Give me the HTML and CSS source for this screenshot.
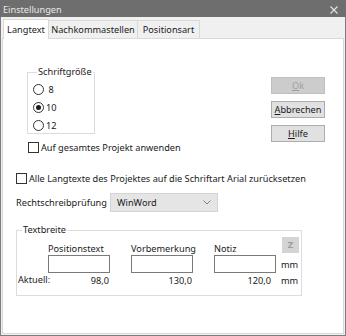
FILE: index.html
```html
<!DOCTYPE html>
<html lang="de">

<head>
    <meta charset="UTF-8">
    <title>Einstellungen</title>
    <link rel="stylesheet" href="styles.css">
</head>

<body>
    <div class="window">
        <div class="titlebar">
            <span class="title">Einstellungen</span>
            <svg class="close" width="10" height="10" viewBox="0 0 10 10">
                <path d="M1.5 1.5 L8.5 8.5 M8.5 1.5 L1.5 8.5" stroke="#e6e6e6" stroke-width="1.1" fill="none" />
            </svg>
        </div>
        <div class="client">
            <div class="tabs">
                <div class="tab active">Langtext</div>
                <div class="tab tab-wide">Nachkommastellen</div>
                <div class="tab tab-mid">Positionsart</div>
            </div>
            <div class="panel">
                <div class="top">
                    <div class="left-col">
                        <fieldset class="group size-group">
                            <legend>Schriftgröße</legend>
                            <div class="radio"><span class="circle"></span><span>&nbsp;8</span></div>
                            <div class="radio"><span class="circle checked"></span><span>10</span></div>
                            <div class="radio"><span class="circle"></span><span>12</span></div>
                        </fieldset>
                        <div class="check apply-row"><span class="box"></span>Auf gesamtes Projekt anwenden</div>
                    </div>
                    <div class="buttons">
                        <button class="btn disabled"><u>O</u>k</button>
                        <button class="btn"><u>A</u>bbrechen</button>
                        <button class="btn"><u>H</u>ilfe</button>
                    </div>
                </div>

                <div class="check reset-row"><span class="box"></span>Alle Langtexte des Projektes auf die Schriftart Arial zurücksetzen</div>

                <div class="spell-row">
                    <span class="spell-label">Rechtschreibprüfung</span>
                    <div class="select">
                        <span>WinWord</span>
                        <svg width="8" height="5" viewBox="0 0 8 5">
                            <path d="M0.5 0.5 L4 4 L7.5 0.5" stroke="#808080" stroke-width="1" fill="none" />
                        </svg>
                    </div>
                </div>

                <fieldset class="group width-group">
                    <legend>Textbreite</legend>
                    <div class="z-btn">Z</div>
                    <div class="width-grid">
                        <span></span>
                        <span class="col-label">Positionstext</span>
                        <span class="col-label">Vorbemerkung</span>
                        <span class="col-label">Notiz</span>
                        <span></span>

                        <span></span>
                        <div class="field"></div>
                        <div class="field"></div>
                        <div class="field"></div>
                        <span class="unit">mm</span>

                        <span class="current">Aktuell:</span>
                        <span class="value">98,0</span>
                        <span class="value">130,0</span>
                        <span class="value last">120,0</span>
                        <span class="unit">mm</span>
                    </div>
                </fieldset>
            </div>
        </div>
    </div>
</body>

</html>
```

FILE: styles.css
```css
body {
    margin: 0;
    font-family: "Noto Sans", sans-serif;
    font-size: 9.2px;
    color: #1a1a1a;
    background-color: #f0f0f0;
}

.window {
    width: 346px;
    height: 336px;
    box-sizing: border-box;
    border: 1px solid #7d7d7d;
    border-top: none;
    display: flex;
    flex-direction: column;
    background-color: #f0f0f0;
}

.titlebar {
    height: 17px;
    background-color: #6e6e6e;
    display: flex;
    align-items: center;
    justify-content: space-between;
    padding: 0 7px 0 3px;
    margin: 0 -1px;
    color: #e8e8e8;
}

.title {
    margin-top: 2px;
}

.close {
    margin-top: 3px;
}

.client {
    flex: 1;
    display: flex;
    flex-direction: column;
    padding: 0 1px 1px 1px;
}

/* Tab strip */
.tabs {
    height: 21px;
    display: flex;
    align-items: flex-end;
    padding-left: 1px;
}

.tab {
    height: 18px;
    line-height: 18px;
    border: 1px solid #d9d9d9;
    border-bottom: none;
    border-left: none;
    box-sizing: border-box;
    background-color: #f0f0f0;
    text-align: center;
    white-space: nowrap;
}

.tab.active {
    width: 46px;
    height: 20px;
    line-height: 19px;
    background-color: #fff;
    border-left: 1px solid #d9d9d9;
    margin-bottom: -1px;
    position: relative;
}

.tab-wide {
    width: 89px;
}

.tab-mid {
    width: 62px;
}

.panel {
    flex: 1;
    background-color: #fff;
    border: 1px solid #d9d9d9;
    display: flex;
    flex-direction: column;
    padding: 0 0 0 13px;
}

.top {
    display: flex;
    justify-content: space-between;
    align-items: flex-start;
    margin-top: 26px;
}

.left-col {
    margin-left: 11px;
}

/* Group boxes */
.group {
    border: 1px solid #dcdcdc;
    margin: 0;
    padding: 0;
}

.group legend {
    padding: 0 1px;
    margin-left: 4px;
    line-height: 14px;
}

.size-group {
    width: 68px;
    box-sizing: border-box;
    height: 69px;
    padding: 1px 0 0 5px;
}

.radio {
    display: flex;
    align-items: center;
    height: 18px;
}

.circle {
    width: 9px;
    height: 9px;
    border: 1px solid #333;
    border-radius: 50%;
    margin-right: 2px;
    display: flex;
    align-items: center;
    justify-content: center;
}

.circle.checked::after {
    content: "";
    width: 5px;
    height: 5px;
    border-radius: 50%;
    background-color: #1a1a1a;
}

.check {
    display: flex;
    align-items: center;
    height: 14px;
    white-space: nowrap;
}

.apply-row {
    margin: 6px 0 0 1px;
}

.box {
    width: 9px;
    height: 9px;
    border: 1px solid #333;
    margin-right: 2px;
}

/* Buttons */
.buttons {
    display: flex;
    flex-direction: column;
    gap: 7px;
    margin: 12px 18px 0 0;
}

.btn {
    width: 54px;
    height: 17px;
    padding: 0;
    font-family: "Noto Sans", sans-serif;
    font-size: 9.2px;
    color: #1a1a1a;
    background-color: #e1e1e1;
    border: 1px solid #adadad;
}

.btn.disabled {
    color: #a0a0a0;
    background-color: #cccccc;
    border-color: #bfbfbf;
}

.reset-row {
    margin-top: 17px;
}

/* Spell check */
.spell-row {
    display: flex;
    align-items: center;
    margin-top: 8px;
}

.spell-label {
    width: 94px;
    white-space: nowrap;
}

.select {
    width: 108px;
    height: 19px;
    box-sizing: border-box;
    background-color: #e5e5e5;
    border: 1px solid #d4d4d4;
    display: flex;
    align-items: center;
    justify-content: space-between;
    padding: 0 6px 0 6px;
}

/* Text width */
.width-group {
    width: 286px;
    box-sizing: border-box;
    height: 73px;
    margin-top: 11px;
    padding: 6px 0 0 1px;
    position: relative;
}

.z-btn {
    position: absolute;
    right: 2px;
    top: 0;
    width: 17px;
    height: 16px;
    background-color: #d4d4d4;
    color: #9a9a9a;
    text-align: center;
    line-height: 16px;
    font-weight: bold;
}

.width-grid {
    display: grid;
    grid-template-columns: 9px 62px 62px 62px auto;
    column-gap: 21px;
    align-items: center;
}

.col-label {
    line-height: 12px;
    white-space: nowrap;
}

.field {
    height: 18px;
    box-sizing: border-box;
    border: 1px solid #7a7a7a;
    background-color: #fff;
}

.unit {
    margin-left: -16px;
}

.current {
    line-height: 14px;
    white-space: nowrap;
}

.value {
    text-align: right;
    padding-right: 1px;
}

.value.last {
    padding-right: 5px;
}
```
